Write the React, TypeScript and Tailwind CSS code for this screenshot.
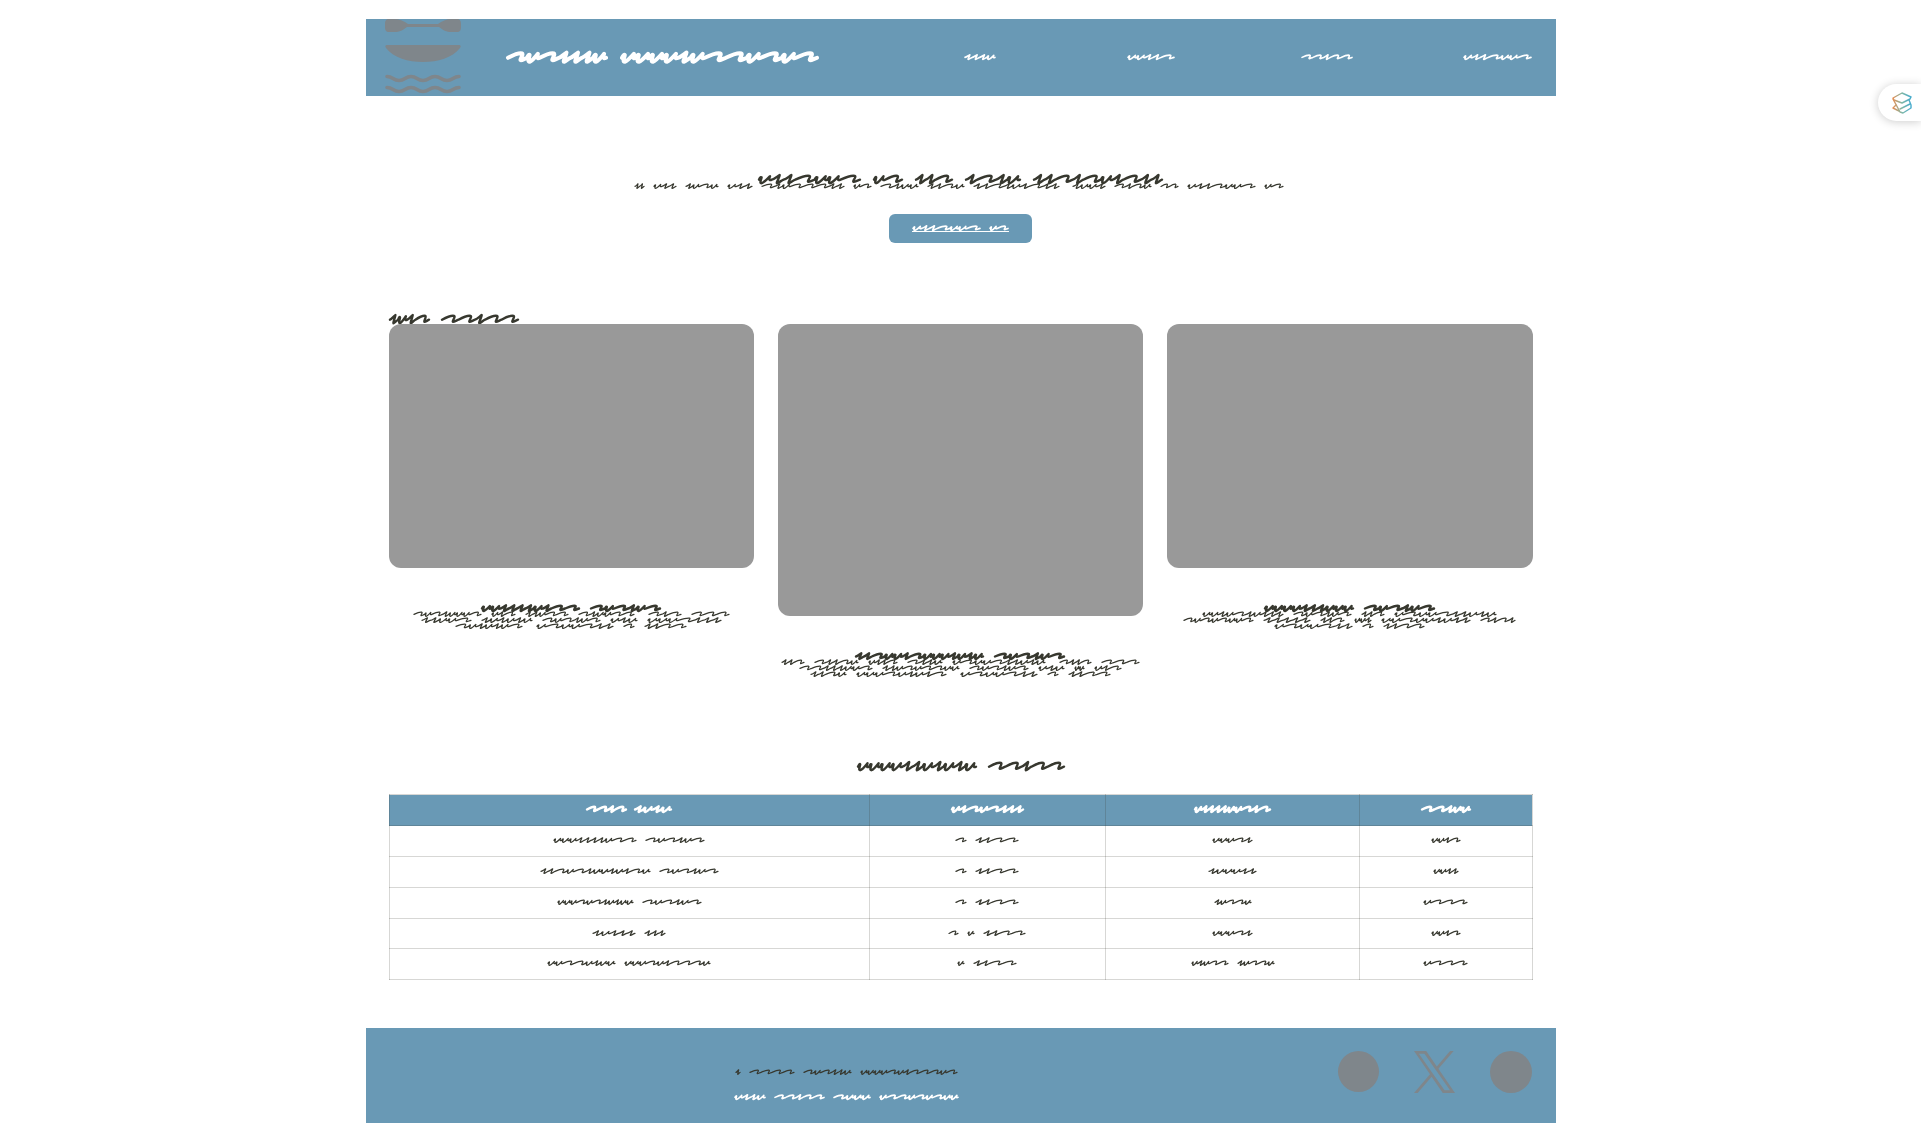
import React from "react";

type Tone = "regular" | "medium" | "bold" | "heading" | "title";

const tones: Record<Tone, { amp: number; stroke: number; gap: number; height: number }> = {
  regular: { amp: 4, stroke: 1.2, gap: 8, height: 6 },
  medium: { amp: 4, stroke: 1.6, gap: 8, height: 6 },
  bold: { amp: 5, stroke: 2.4, gap: 7, height: 6 },
  heading: { amp: 7, stroke: 2.4, gap: 11, height: 10 },
  title: { amp: 8, stroke: 4, gap: 14, height: 14 },
};

// Advance and pen curve (x, y pairs of cubic segments) of each handwriting stroke.
const strokes: Record<string, { adv: number; segs: number[][] }> = {
  r: {
    adv: 1.5,
    segs: [
      [0.35, 0.3, 0.85, -0.05, 1.1, 0.05],
      [1.25, 0.15, 0.9, 0.85, 1, 0.9],
      [1.1, 0.95, 1.3, 0.7, 1.5, 0.6],
    ],
  },
  u: {
    adv: 1,
    segs: [
      [0.05, 0.4, 0.15, 0.15, 0.2, 0.25],
      [0.2, 0.5, 0, 1.1, 0.2, 1.1],
      [0.4, 1, 0.65, 0.5, 0.85, 0.1],
      [0.8, 0.3, 0.7, 0.85, 1, 0.6],
    ],
  },
  n: {
    adv: 0.9,
    segs: [
      [0.2, 0.5, 0.45, 0.1, 0.6, -0.05],
      [0.6, 0.2, 0.3, 1.1, 0.4, 1.1],
      [0.55, 1, 0.75, 0.7, 0.9, 0.6],
    ],
  },
};

function wordPath(pattern: string, x: number, width: number, amp: number, top: number) {
  const list = pattern.split("").map((c) => strokes[c]);
  const k = width / list.reduce((s, g) => s + g.adv, 0);
  let at = 0;
  let d = `M${x.toFixed(1)} ${(top + amp * 0.6).toFixed(1)}`;
  for (const g of list) {
    for (const s of g.segs) {
      const p = s.map((v, i) => (i % 2 === 0 ? x + (at + v) * k : top + v * amp).toFixed(1));
      d += `C${p.join(" ")}`;
    }
    at += g.adv;
  }
  return d;
}

// Each word is written as its strokes followed by its width; "_" widens the gap before it.
function Scribble({
  line,
  tone = "regular",
  gap,
  className = "",
}: {
  line: string;
  tone?: Tone;
  gap?: number;
  className?: string;
}) {
  const t = tones[tone];
  const space = gap ?? t.gap;
  const top = (t.height - t.amp) / 2;
  let x = 0;
  let d = "";
  line.split(" ").forEach((word, i) => {
    const m = /^(_?)([run]+)(\d+)$/.exec(word);
    if (!m) return;
    if (i > 0) x += space + (m[1] ? 4 : 0);
    const w = Number(m[3]);
    d += wordPath(m[2], x + 1, w - 2, t.amp, top);
    x += w;
  });
  return (
    <svg
      width={x}
      height={t.height}
      viewBox={`0 0 ${x} ${t.height}`}
      className={`block shrink-0 overflow-visible ${className}`}
      fill="none"
      stroke="currentColor"
      strokeWidth={t.stroke}
      strokeLinecap="round"
      strokeLinejoin="round"
      aria-hidden="true"
    >
      <path d={d} />
    </svg>
  );
}

const nav = [
  { label: "First", line: "nnnu32" },
  { label: "Second", line: "uunnr48" },
  { label: "Third", line: "rrnrr52" },
  { label: "Fourth", line: "unnruur69" },
];

const cards = [
  {
    ratio: "aspect-[3/2]",
    title: "uunnnnunrr99 rurnur71",
    lines: [
      "rurnuuur69 unr25 nnurr44 rnuurr57 _rnr34 rrr39",
      "nnuur51 nununu52 rurnur59 unu28 uuurnnn75",
      "rununur68 _uruurnn78 r12 nnrr43",
    ],
  },
  {
    ratio: "aspect-[5/4]",
    title: "nnruunruuununu129 rurnur71",
    lines: [
      "nnr24 rnnru45 unnr30 rnnu36 uruurnnunu94 _rnnr33 rrr39",
      "rrnnnuur74 nnururruu78 rurnur60 unu27 uu11 unr28",
      "nnru37 uuurununr91 _uruurnn78 r12 nnrr43",
    ],
  },
  {
    ratio: "aspect-[3/2]",
    title: "uuuunnnuuu90 rurnur71",
    lines: [
      "uunurnunnn82 rurnur59 nnr24 uruurnnunu103",
      "rururuur71 nnnnn48 nnr25 uun18 uuruununn90 rnrn36",
      "uruurnn79 r12 nnrr42",
    ],
  },
];

const columns = [
  { width: "w-[42%]", line: "rrnr41 nunu38" },
  { width: "w-[20.7%]", line: "unrurnnn73" },
  { width: "w-[22.2%]", line: "unnnnuurnr77" },
  { width: "w-[15.1%]", line: "rrnuu50" },
];

const rows = [
  ["uuunnnnurr84 rurnur60", "r12 nnrr44", "uuurn41", "uunr30"],
  ["nnrurnuununru111 rurnur60", "r12 nnrr44", "nuuunn49", "uunn26"],
  ["uuururnunuu77 rurnur60", "r12 nnrr44", "nurru38", "urrr45"],
  ["nunnn44 nnn22", "r11 u8 nnrr43", "uuurn41", "uunr30"],
  ["uurrunuu69 uuurunrrru87", "u8 nnrr44", "unurr38 nurru38", "urrr45"],
];

function Logo() {
  return (
    <svg viewBox="0 0 76 76" className="size-[76px] shrink-0 text-[#7f868b]" fill="currentColor" aria-hidden="true">
      <path d="M4 0h5c6 0 10 2 14 5h30c4-3 8-5 14-5h5c3 0 4 2 4 5v3c0 3-1 5-4 5h-5c-6 0-9-2-13-5H22c-4 3-7 5-13 5H4c-3 0-4-2-4-5V5c0-3 1-5 4-5Z" />
      <path d="M2 26h72c2 0 2 2 1 3-8 10-22 14-37 14S9 39 1 29c-1-1-1-3 1-3Z" />
      <g fill="none" stroke="currentColor" strokeWidth="3.6" strokeLinecap="round">
        <path d="M2 57.500c6 0 6 4 12 4s6-4 12-4 6 4 12 4 6-4 12-4 6 4 12 4 6-4 12-4" />
        <path d="M2 68.500c6 0 6 4 12 4s6-4 12-4 6 4 12 4 6-4 12-4 6 4 12 4 6-4 12-4" />
      </g>
    </svg>
  );
}

export default function App() {
  return (
    <div className="min-h-screen overflow-x-hidden bg-white font-sans text-[#37382f]">
      <div className="mx-auto max-w-[1190px] pt-[19px]">
        <header className="flex h-[77px] items-center bg-[#6999b5] pr-6 pb-px pl-[19px] text-white">
          <Logo />
          <h1 className="ml-[46px]" aria-label="Site title">
            <Scribble line="rurnnnu100 uuuunurrurur197" tone="title" />
          </h1>
          <nav className="grid flex-1 grid-cols-4 justify-items-end">
            {nav.map((n) => (
              <a key={n.label} href="#" aria-label={n.label} className="py-2">
                <Scribble line={n.line} tone="medium" />
              </a>
            ))}
          </nav>
        </header>

        <main className="px-[23px]">
          <section className="flex flex-col items-center pt-[78px]">
            <h2 aria-label="Introduction">
              <Scribble line="unnruur103 ur30 nnr38 nrnu56 nnrnrunrnn130" tone="heading" gap={12} />
            </h2>
            <Scribble
              className="-mt-px mr-1 mb-px"
              line="nn11 unn24 nuru34 unn26 rnurrrnn84 ur19 rnuu39 nnru38 nnrnunrnn87 _nuun34 rnru38 rr19 unnruur69 ur20"
            />
            <a
              href="#"
              aria-label="More"
              className="mt-6 flex h-[29px] w-[143px] items-center justify-center rounded-md bg-[#6999b5] text-white"
            >
              <span className="border-b border-white">
                <Scribble line="unnruur69 ur20" tone="medium" />
              </span>
            </a>
          </section>

          <section className="pt-[71px]">
            <h2 aria-label="Gallery">
              <Scribble line="nunr41 rrnrr78" tone="heading" />
            </h2>
            <div className="grid grid-cols-3 items-start gap-6">
              {cards.map((c) => (
                <article key={c.title} className="flex flex-col items-center">
                  <div className={`relative mb-[37px] w-full rounded-xl bg-[#999999] ${c.ratio}`} />
                  <h3 aria-label="Card title">
                    <Scribble line={c.title} tone="bold" gap={10} />
                  </h3>
                  {c.lines.map((l) => (
                    <Scribble key={l} line={l} gap={9} />
                  ))}
                </article>
              ))}
            </div>
          </section>

          <section className="pt-[84px]">
            <h2 aria-label="Table" className="flex justify-center">
              <Scribble line="uuuunnununu120 rrnrr77" tone="heading" />
            </h2>
            <table className="mt-[23px] w-full table-fixed border-collapse">
              <thead>
                <tr className="h-[31px] bg-[#6999b5] text-white">
                  {columns.map((c, i) => (
                    <th key={i} scope="col" className={`border border-[#37382f]/20 p-0 pb-0.5 ${c.width}`}>
                      <Scribble line={c.line} tone="bold" className="mx-auto" />
                    </th>
                  ))}
                </tr>
              </thead>
              <tbody>
                {rows.map((r, i) => (
                  <tr key={i} className={i === 3 ? "h-[30px]" : "h-[31px]"}>
                    {r.map((cell, j) => (
                      <td key={j} className="border border-[#37382f]/20 p-0 pb-0.5">
                        <Scribble line={cell} className="mx-auto" />
                      </td>
                    ))}
                  </tr>
                ))}
              </tbody>
            </table>
          </section>
        </main>

        <footer className="mt-12 flex h-24 items-start gap-9 bg-[#6999b5] px-6 pt-[23px]">
          <div className="flex flex-1 flex-col items-center gap-[19px] pt-[18px] pl-0.5">
            <Scribble line="n6 rrrr46 rurnnu49 uuuurunrrrur98" />
            <Scribble line="unnu32 rrnrr51 ruuu38 urrururuu80" tone="medium" className="text-white" />
          </div>
          <div className="flex gap-[35px] text-[#7f868b]">
            <a href="#" aria-label="Social" className="size-[41px] rounded-full bg-[#7f868b]" />
            <a href="#" aria-label="X">
              <svg viewBox="0 0 1200 1227" className="h-[42px] w-[41px]" fill="currentColor">
                <path d="M714.163 519.284L1160.89 0H1055.03L667.137 450.887L357.328 0H0L468.492 681.821L0 1226.370H105.866L515.491 750.218L842.672 1226.370H1200L714.137 519.284H714.163ZM569.165 687.828L521.697 619.934L144.011 79.694H306.615L611.412 515.685L658.880 583.579L1055.080 1150.300H892.476L569.165 687.854V687.828Z" />
              </svg>
            </a>
            <a href="#" aria-label="Social" className="size-[42px] rounded-full bg-[#7f868b]" />
          </div>
        </footer>
      </div>

      <button
        type="button"
        aria-label="Open assistant"
        className="fixed top-[84px] right-0 flex h-[37px] w-[43px] items-center justify-center rounded-l-full bg-white pl-1 shadow-[0_1px_10px_rgba(0,0,0,0.2)]"
      >
        <svg viewBox="0 0 22 24" className="h-6 w-[22px]" fill="none" strokeWidth="1.4" strokeLinejoin="round" strokeLinecap="round">
          <defs>
            <linearGradient id="mark" x1="1" y1="0" x2="21" y2="0" gradientUnits="userSpaceOnUse">
              <stop offset="0" stopColor="#f08a4b" />
              <stop offset="0.500" stopColor="#7fb8a8" />
              <stop offset="1" stopColor="#3fa9d0" />
            </linearGradient>
          </defs>
          <g stroke="url(#mark)">
            <path d="M2 7l9-5 9 4-1 2-8 4-8-3z" />
            <path d="M2 8l7 13 3 1 8-5v-3l-2-5" />
            <path d="M5 14l-3 3 6 3" />
            <path d="M9 18l10-5" />
          </g>
        </svg>
      </button>
    </div>
  );
}
